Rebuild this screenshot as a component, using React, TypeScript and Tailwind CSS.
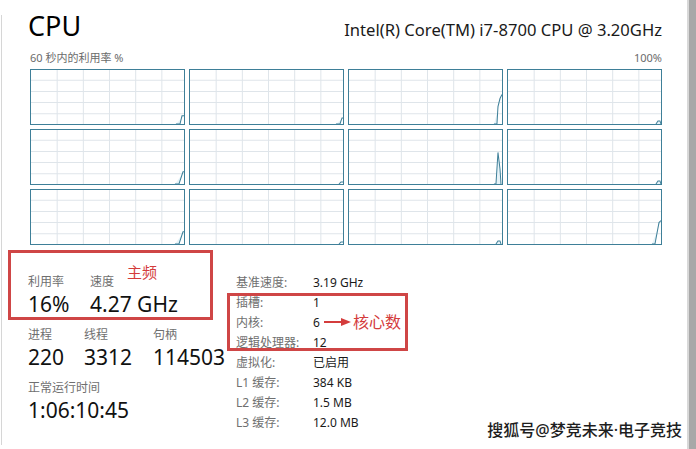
import React from 'react'

// tiny usage traces in the bottom-right corner of each core graph
const traces: string[] = [
  '144,53 148,53 150,45 152,45',
  '145,53 149,53 151,47 152,47',
  '144,53 147,53 148,36 150,28 152,24',
  '147,53 149,50 151,50 152,53',
  '143,53 147,53 151,41 152,41',
  '148,53 150,51 152,51',
  '144,53 146,53 148,22 150,38 151,53',
  '147,53 149,50 151,50 152,53',
  '143,53 147,53 151,41 152,41',
  '148,53 150,51 152,51',
  '146,53 148,50 150,50 151,53',
  '143,53 146,53 150,32 152,30',
]

function CoreGraph({ trace }: { trace: string }) {
  return (
    <div className="h-[56px] border-[1.5px] border-[#3e7f98] bg-white">
      <svg viewBox="0 0 152 53" preserveAspectRatio="none" className="block h-full w-full">
        {[26, 52, 78, 104, 130].map((x) => (
          <line key={x} x1={x} y1={0} x2={x} y2={53} stroke="#dfe5ea" strokeWidth={1} />
        ))}
        {[10, 21, 32, 43].map((y) => (
          <line key={y} x1={0} y1={y} x2={152} y2={y} stroke="#dfe5ea" strokeWidth={1} />
        ))}
        <polyline points={trace} fill="#e6f3f8" stroke="#3e7f98" strokeWidth={1} />
      </svg>
    </div>
  )
}

function Stat({ label, value, w }: { label: string; value: string; w?: string }) {
  return (
    <div className={w}>
      <div className="text-[12px] leading-[16px] text-[#6f6f6f]">{label}</div>
      <div className="mt-[1px] text-[21px] leading-[26px] text-[#111]">{value}</div>
    </div>
  )
}

const details = [
  ['基准速度:', '3.19 GHz'],
  ['插槽:', '1'],
  ['内核:', '6'],
  ['逻辑处理器:', '12'],
  ['虚拟化:', '已启用'],
  ['L1 缓存:', '384 KB'],
  ['L2 缓存:', '1.5 MB'],
  ['L3 缓存:', '12.0 MB'],
]

export default function App() {
  return (
    <div className="relative flex h-[449px] w-[696px] overflow-hidden bg-white font-['Noto_Sans','Noto_Sans_CJK_SC',sans-serif]">
      <div className="mb-[4px] ml-[1px] mt-[15px] w-px bg-[#d6d6d6]" />

      <div className="flex-1 pl-[26px]">
        <div className="flex w-[634px] items-baseline justify-between pt-[10px]">
          <span className="text-[27px] leading-[32px] text-black">CPU</span>
          <span className="text-[16.6px] leading-[20px] text-[#1a1a1a]">Intel(R) Core(TM) i7-8700 CPU @ 3.20GHz</span>
        </div>

        <div className="ml-[2px] mt-[9px] flex w-[632px] justify-between text-[11px] leading-[14px] text-[#6b6b6b]">
          <span>60 秒内的利用率 %</span>
          <span>100%</span>
        </div>

        <div className="ml-[2px] mt-[4px] grid w-[632px] grid-cols-4 gap-[4px]">
          {traces.map((t, i) => (
            <CoreGraph key={i} trace={t} />
          ))}
        </div>

        <div className="mt-[29px] flex">
          <div className="flex w-[208px] flex-col gap-[10px]">
            <div className="flex">
              <Stat label="利用率" value="16%" w="w-[62px]" />
              <Stat label="速度" value="4.27 GHz" />
            </div>
            <div className="flex">
              <Stat label="进程" value="220" w="w-[56px]" />
              <Stat label="线程" value="3312" w="w-[69px]" />
              <Stat label="句柄" value="114503" />
            </div>
            <Stat label="正常运行时间" value="1:06:10:45" />
          </div>

          <div className="-mt-[1px] flex flex-col text-[12px] leading-[20px]">
            {details.map(([k, v]) => (
              <div key={k} className="flex">
                <span className="w-[77px] text-[#6f6f6f]">{k}</span>
                <span className="text-[#1a1a1a]">{v}</span>
              </div>
            ))}
          </div>
        </div>
      </div>

      <div className="w-[9px] border-l-2 border-[#d8d8d8] bg-[#a8a8a8]" />

      {/* annotations */}
      <div className="absolute left-[8px] top-[250px] h-[70px] w-[205px] border-[3px] border-[#cf4646]" />
      <span className="absolute left-[127px] top-[262px] text-[15px] leading-[20px] text-[#d43c3c]">主频</span>
      <div className="absolute left-[227px] top-[293px] h-[58px] w-[181px] border-[3px] border-[#cf4646]" />
      <svg className="absolute left-[324px] top-[317px]" width="28" height="10" viewBox="0 0 28 10">
        <line x1="0" y1="5" x2="19" y2="5" stroke="#d43c3c" strokeWidth="2" />
        <polygon points="17,1 27,5 17,9" fill="#d43c3c" />
      </svg>
      <span className="absolute left-[353px] top-[312px] text-[16px] leading-[20px] text-[#d43c3c]">核心数</span>

      <span className="absolute right-[14px] top-[420px] text-[16px] font-medium leading-[20px] text-[#1e1e1e] [text-shadow:0_0_2px_#fff,0_0_1px_#fff]">
        搜狐号@梦竞未来·电子竞技
      </span>
    </div>
  )
}
